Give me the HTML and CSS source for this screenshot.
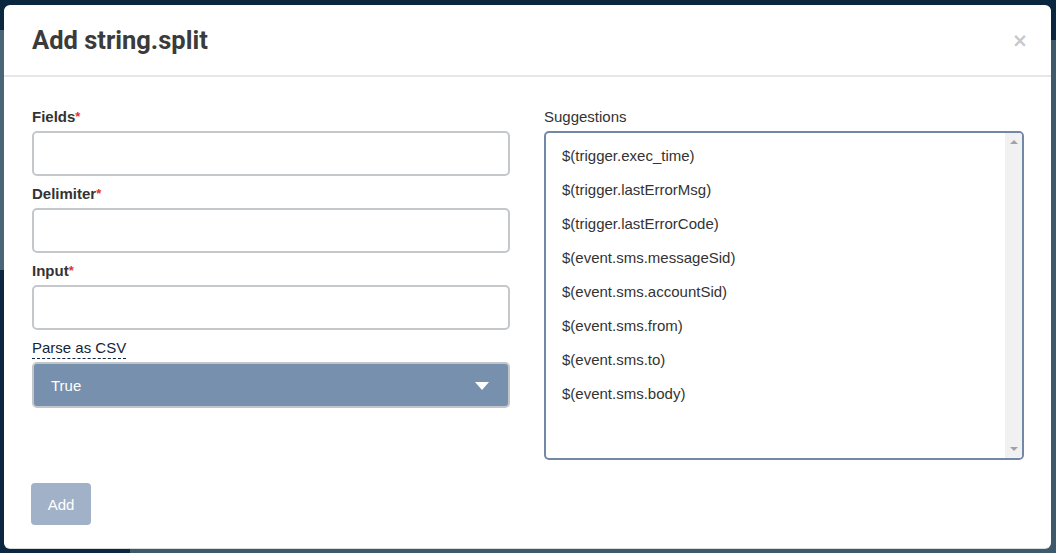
FILE: index.html
```html
<!DOCTYPE html>
<html lang="en">
<head>
    <meta charset="UTF-8">
    <meta name="viewport" content="width=device-width, initial-scale=1.0">
    <title>Add string.split</title>
    <link rel="stylesheet" href="styles.css">
</head>
<body>
    <div class="modal">
        <div class="modalHeader">
            <h2>Add string.split</h2>
            <span class="close">&times;</span>
        </div>

        <form class="modalBody" onsubmit="event.preventDefault();">
            <div class="col">
                <label class="fieldLabel" for="fields">Fields<span class="req">*</span></label>
                <input type="text" id="fields" class="field">

                <label class="fieldLabel" for="delimiter">Delimiter<span class="req">*</span></label>
                <input type="text" id="delimiter" class="field">

                <label class="fieldLabel" for="input">Input<span class="req">*</span></label>
                <input type="text" id="input" class="field">

                <div><span class="hint">Parse as CSV</span></div>
                <div class="select">
                    <span>True</span>
                    <span class="caret"></span>
                </div>
            </div>

            <div class="col">
                <div class="plainLabel">Suggestions</div>
                <div class="suggestBox">
                    <ul class="suggestList">
                        <li>$(trigger.exec_time)</li>
                        <li>$(trigger.lastErrorMsg)</li>
                        <li>$(trigger.lastErrorCode)</li>
                        <li>$(event.sms.messageSid)</li>
                        <li>$(event.sms.accountSid)</li>
                        <li>$(event.sms.from)</li>
                        <li>$(event.sms.to)</li>
                        <li>$(event.sms.body)</li>
                    </ul>
                    <div class="scrollbar">
                        <span class="arrow up"></span>
                        <span class="arrow down"></span>
                    </div>
                </div>
            </div>
        </form>

        <div class="modalFooter">
            <button class="btnAdd" disabled>Add</button>
        </div>
    </div>
</body>
</html>
```

FILE: styles.css
```css
body {
    margin: 0;
    padding: 5px 5px 4px 4px;
    font-family: "Liberation Sans", Arial, sans-serif;
    font-size: 15px;
    color: #333;
    /* fundo escurecido atrás do modal */
    background:
        linear-gradient(#3e5a6a, #3e5a6a) 130px 40px / 100% 100% no-repeat,
        linear-gradient(#4a6576, #4a6576) 0 30px / 130px 240px no-repeat,
        #0b2740;
}

.modal {
    background: #fff;
    border-radius: 6px;
    box-shadow: 0 1px 0 #d6dbde;
}

.modalHeader {
    height: 70px;
    display: flex;
    align-items: center;
    justify-content: space-between;
    padding: 0 23px 0 28px;
    border-bottom: 2px solid #e5e8eb;
}

.modalHeader h2 {
    margin: 0;
    font-family: Roboto, sans-serif;
    font-weight: bold;
    font-size: 25.5px;
    color: #3b3b3b;
}

.close {
    font-family: "DejaVu Sans", sans-serif;
    font-weight: bold;
    font-size: 19px;
    color: #c4c9ce;
}

.modalBody {
    display: grid;
    grid-template-columns: 478px 480px;
    gap: 34px;
    padding: 30px 27px 0 28px;
    margin: 0;
}

.col {
    display: flex;
    flex-direction: column;
}

.fieldLabel {
    font-weight: bold;
    line-height: 20px;
    margin-bottom: 4px;
    color: #333;
}

.req {
    color: #e0313a;
    font-size: 13px;
    vertical-align: top;
}

.field {
    box-sizing: border-box;
    height: 45px;
    margin: 0 0 8px;
    border: 2px solid #c5c8cb;
    border-radius: 5px;
    font-size: 15px;
    padding: 0 16px;
    background: #fff;
}

.hint {
    display: inline-block;
    line-height: 20px;
    color: #13253a;
    border-bottom: 1px dashed #13253a;
}

.select {
    box-sizing: border-box;
    height: 46px;
    margin-top: 3px;
    display: flex;
    align-items: center;
    justify-content: space-between;
    padding: 0 19px 0 17px;
    background: #7690ad;
    border: 2px solid #c2c6cb;
    border-radius: 5px;
    color: #fff;
}

.caret {
    width: 0;
    height: 0;
    border-left: 7px solid transparent;
    border-right: 7px solid transparent;
    border-top: 8px solid #fff;
    margin-top: 2px;
}

.plainLabel {
    line-height: 20px;
    margin-bottom: 4px;
}

.suggestBox {
    box-sizing: border-box;
    height: 329px;
    display: flex;
    border: 2px solid #7289a6;
    border-radius: 5px;
    overflow: hidden;
}

.suggestList {
    flex: 1;
    list-style: none;
    margin: 0;
    padding: 6px 0;
}

.suggestList li {
    line-height: 20px;
    padding: 7px 16px;
}

/* barra de rolagem desenhada */
.scrollbar {
    width: 17px;
    background: #f1f1f1;
    display: flex;
    flex-direction: column;
    justify-content: space-between;
    align-items: center;
    padding: 7px 0;
}

.arrow {
    width: 0;
    height: 0;
    border-left: 4px solid transparent;
    border-right: 4px solid transparent;
}

.arrow.up {
    border-bottom: 4px solid #a3a3a3;
}

.arrow.down {
    border-top: 4px solid #a3a3a3;
}

.modalFooter {
    padding: 23px 28px 23px 27px;
}

.btnAdd {
    height: 42px;
    width: 60px;
    border: none;
    border-radius: 4px;
    background: #a1b1c7;
    color: #fff;
    font-family: "Liberation Sans", Arial, sans-serif;
    font-size: 15px;
}
```
